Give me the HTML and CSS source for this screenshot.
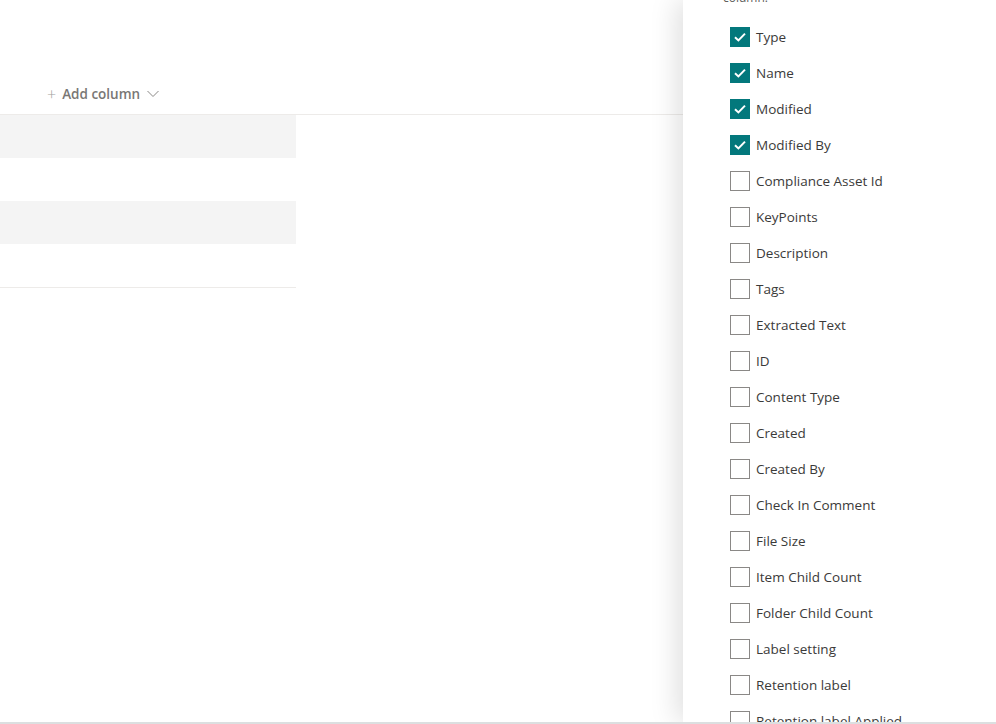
FILE: index.html
```html
<!DOCTYPE html>
<html lang="en">
<head>
<meta charset="utf-8">
<title>Show/hide columns</title>
<link rel="stylesheet" href="styles.css">
</head>
<body>
<div class="app">
  <main class="list">
    <div class="list-header">
      <div class="add-column">
        <span class="plus">+</span>
        <span class="add-label">Add column</span>
        <svg class="chev" width="12" height="8" viewBox="0 0 12 8"><path d="M0.5 1 L6 6.5 L11.5 1" fill="none" stroke="#8a8886" stroke-width="1"/></svg>
      </div>
    </div>
    <div class="rows">
      <div class="row alt"></div>
      <div class="row"></div>
      <div class="row alt"></div>
      <div class="row last"></div>
    </div>
  </main>
  <aside class="panel">
    <p class="desc">column.</p>
    <ul class="cols">
      <li class="col"><span class="box on"><svg width="12" height="10" viewBox="0 0 12 10"><path d="M1 5.2 L4.4 8.4 L11 1.6" fill="none" stroke="#fff" stroke-width="2"/></svg></span><span>Type</span></li>
      <li class="col"><span class="box on"><svg width="12" height="10" viewBox="0 0 12 10"><path d="M1 5.2 L4.4 8.4 L11 1.6" fill="none" stroke="#fff" stroke-width="2"/></svg></span><span>Name</span></li>
      <li class="col"><span class="box on"><svg width="12" height="10" viewBox="0 0 12 10"><path d="M1 5.2 L4.4 8.4 L11 1.6" fill="none" stroke="#fff" stroke-width="2"/></svg></span><span>Modified</span></li>
      <li class="col"><span class="box on"><svg width="12" height="10" viewBox="0 0 12 10"><path d="M1 5.2 L4.4 8.4 L11 1.6" fill="none" stroke="#fff" stroke-width="2"/></svg></span><span>Modified By</span></li>
      <li class="col"><span class="box"></span><span>Compliance Asset Id</span></li>
      <li class="col"><span class="box"></span><span>KeyPoints</span></li>
      <li class="col"><span class="box"></span><span>Description</span></li>
      <li class="col"><span class="box"></span><span>Tags</span></li>
      <li class="col"><span class="box"></span><span>Extracted Text</span></li>
      <li class="col"><span class="box"></span><span>ID</span></li>
      <li class="col"><span class="box"></span><span>Content Type</span></li>
      <li class="col"><span class="box"></span><span>Created</span></li>
      <li class="col"><span class="box"></span><span>Created By</span></li>
      <li class="col"><span class="box"></span><span>Check In Comment</span></li>
      <li class="col"><span class="box"></span><span>File Size</span></li>
      <li class="col"><span class="box"></span><span>Item Child Count</span></li>
      <li class="col"><span class="box"></span><span>Folder Child Count</span></li>
      <li class="col"><span class="box"></span><span>Label setting</span></li>
      <li class="col"><span class="box"></span><span>Retention label</span></li>
      <li class="col"><span class="box"></span><span>Retention label Applied</span></li>
    </ul>
  </aside>
</div>
</body>
</html>
```
FILE: styles.css
```css
html, body {
  margin: 0;
  padding: 0;
  background: #fff;
  overflow: hidden;
}
body {
  font-family: "Open Sans", "Noto Sans", sans-serif;
  color: #3b3a39;
}
.app {
  display: flex;
  height: 722px;
  border-bottom: 2px solid #dcdfe0;
  overflow: hidden;
}
.list {
  flex: 1;
  min-width: 0;
}
.list-header {
  height: 115px;
  border-bottom: 1px solid #edebe9;
  display: flex;
  align-items: flex-end;
  box-sizing: border-box;
}
.add-column {
  display: flex;
  align-items: center;
  height: 40px;
  margin-bottom: 0;
  padding-left: 47px;
  color: #797775;
  font-size: 13.5px;
  font-weight: 600;
}
.plus {
  font-weight: 300;
  font-size: 16px;
  color: #a19f9d;
  margin-right: 6px;
  line-height: 1;
}
.chev {
  margin-left: 7px;
}
.rows {
  width: 296px;
}
.row {
  height: 43px;
}
.row.alt {
  background: #f4f4f4;
}
.row.last {
  border-bottom: 1px solid #edebe9;
}
.panel {
  width: 313px;
  flex: none;
  background: #fff;
  box-shadow: -6px 0 26px rgba(0, 0, 0, 0.13);
  position: relative;
  z-index: 1;
  overflow: hidden;
}
.desc {
  margin: -10px 0 0 40px;
  font-size: 12px;
  line-height: 16px;
  color: #605e5c;
}
.cols {
  list-style: none;
  margin: 13px 0 0 47px;
  padding: 0;
}
.col {
  display: flex;
  align-items: center;
  height: 36px;
  font-size: 13.5px;
}
.box {
  width: 20px;
  height: 20px;
  box-sizing: border-box;
  border: 1px solid #8a8886;
  margin-right: 6px;
  display: flex;
  align-items: center;
  justify-content: center;
  flex: none;
}
.box.on {
  background: #03787c;
  border-color: #03787c;
}
```
